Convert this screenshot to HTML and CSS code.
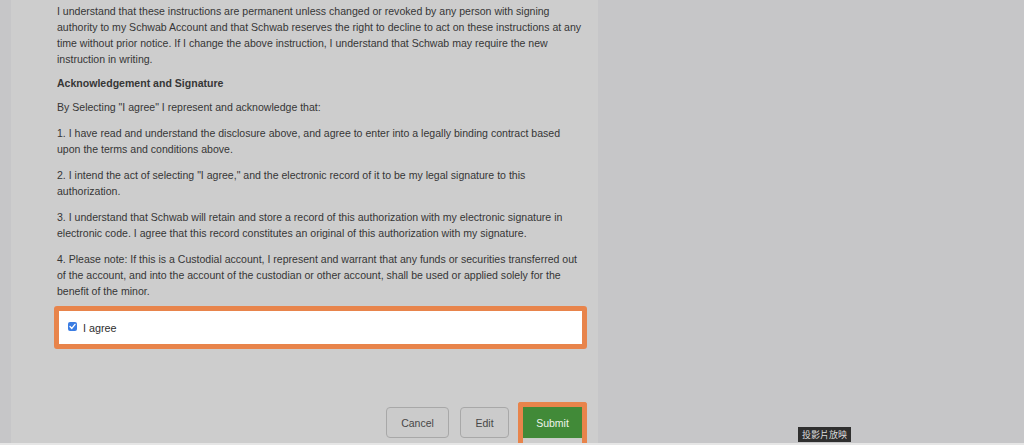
FILE: index.html
```html
<!DOCTYPE html>
<html lang="en">
<head>
<meta charset="utf-8">
<title>Acknowledgement and Signature</title>
<link rel="stylesheet" href="styles.css">
</head>
<body>
<div class="screen">
  <div class="main">
    <div class="strip"></div>
    <div class="panel">
      <div class="content">
        <p class="para tight">I understand that these instructions are permanent unless changed or revoked by any person with signing authority to my Schwab Account and that Schwab reserves the right to decline to act on these instructions at any time without prior notice. If I change the above instruction, I understand that Schwab may require the new instruction in writing.</p>
        <p class="para tight heading">Acknowledgement and Signature</p>
        <p class="para">By Selecting "I agree" I represent and acknowledge that:</p>
        <p class="para">1. I have read and understand the disclosure above, and agree to enter into a legally binding contract based upon the terms and conditions above.</p>
        <p class="para">2. I intend the act of selecting "I agree," and the electronic record of it to be my legal signature to this authorization.</p>
        <p class="para">3. I understand that Schwab will retain and store a record of this authorization with my electronic signature in electronic code. I agree that this record constitutes an original of this authorization with my signature.</p>
        <p class="para last">4. Please note: If this is a Custodial account, I represent and warrant that any funds or securities transferred out of the account, and into the account of the custodian or other account, shall be used or applied solely for the benefit of the minor.</p>
        <label class="agree-box">
          <svg class="check" width="9" height="9" viewBox="0 0 9 9" aria-hidden="true">
            <rect x="0" y="0" width="9" height="9" rx="2" fill="#3b7de3"/>
            <path d="M2 4.6 L3.8 6.4 L7 2.4" fill="none" stroke="#ffffff" stroke-width="1.4" stroke-linecap="round" stroke-linejoin="round"/>
          </svg>
          <span>I agree</span>
        </label>
      </div>
      <div class="separator"></div>
      <div class="actions">
        <button class="btn btn-cancel" type="button">Cancel</button>
        <button class="btn btn-edit" type="button">Edit</button>
        <div class="highlight">
          <button class="btn submit" type="button">Submit</button>
        </div>
      </div>
    </div>
    <div class="rest"></div>
  </div>
  <div class="bottom-line"></div>
  <div class="tooltip">投影片放映</div>
</div>
</body>
</html>
```

FILE: styles.css
```css
html, body {
  margin: 0;
  padding: 0;
}

body {
  width: 1024px;
  height: 445px;
  overflow: hidden;
  background: #c6c6c8;
  font-family: "Liberation Sans", Arial, "Noto Sans CJK TC", sans-serif;
  font-size: 10.56px;
  color: #363636;
}

.screen {
  position: relative;
  display: flex;
  flex-direction: column;
  height: 445px;
}

.main {
  flex: 1;
  display: flex;
  min-height: 0;
}

.strip {
  width: 11px;
  background: #c6c6c8;
}

.panel {
  width: 587px;
  background: #cdcdcd;
  display: flex;
  flex-direction: column;
}

.rest {
  flex: 1;
  background: #c6c6c8;
}

.content {
  padding: 3px 12px 0 46px;
}

.para {
  margin: 0 0 10px;
  line-height: 16px;
}

.para.tight {
  margin-bottom: 8px;
}

.para.last {
  margin-bottom: 7px;
}

.heading {
  font-weight: bold;
}

.agree-box {
  display: flex;
  align-items: center;
  gap: 6px;
  margin-left: -3px;
  width: 533px;
  height: 43px;
  box-sizing: border-box;
  border: 5px solid #e8844b;
  border-radius: 3px;
  background: #ffffff;
  padding: 0 0 0 9px;
  color: #2f2f2f;
  font-size: 10.8px;
}

.check {
  display: block;
  margin-top: -2px;
}

.separator {
  height: 1px;
  background: #bdbdbd;
  margin: 33px 13px 0 15px;
}

.actions {
  display: flex;
  justify-content: flex-end;
  align-items: flex-start;
  padding: 20px 11px 0 0;
}

.btn {
  font-family: "Liberation Sans", Arial, sans-serif;
  font-size: 10.5px;
  color: #474747;
  background: #cbcbcb;
  border: 1px solid #a8a8a8;
  border-radius: 4px;
  height: 31px;
  padding: 0;
  margin-top: 5px;
}

.btn-cancel {
  width: 63px;
  margin-right: 11px;
}

.btn-edit {
  width: 49px;
  margin-right: 9px;
}

.highlight {
  border: 5px solid #e8844b;
  border-bottom: none;
  border-radius: 3px 3px 0 0;
  height: 50px;
}

.submit {
  display: block;
  width: 59px;
  height: 32px;
  margin: 0;
  border: none;
  border-bottom: 1px solid #c8cfc6;
  border-radius: 0;
  background: #418a38;
  color: #eef4ec;
}

.bottom-line {
  height: 2px;
  background: #e6e6e6;
}

.tooltip {
  position: absolute;
  left: 798px;
  top: 427px;
  height: 15px;
  padding: 0 4px;
  background: #2f2f2f;
  color: #dedede;
  font-family: "Noto Sans CJK TC", "Noto Sans CJK SC", sans-serif;
  font-size: 9px;
  line-height: 15px;
}
```
